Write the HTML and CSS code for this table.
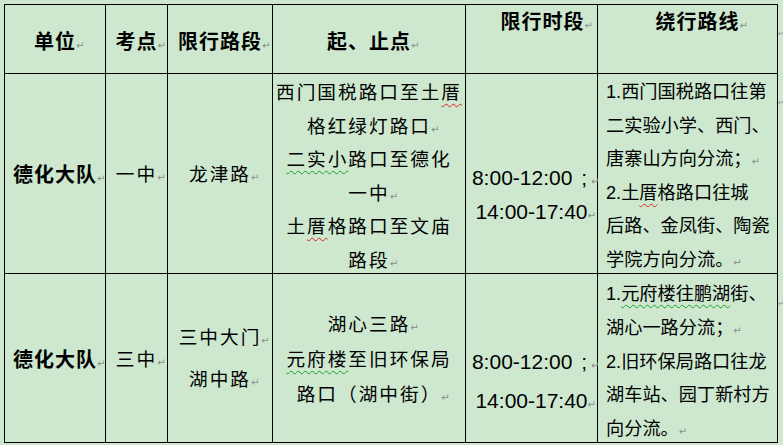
FILE: index.html
```html
<!DOCTYPE html>
<html lang="zh-CN">
<head>
<meta charset="utf-8">
<title>限行路段</title>
<link rel="stylesheet" href="styles.css">
</head>
<body>
<div class="page">
  <div class="tbl">
    <div class="cell hd hd-mid">单位<span class="pm">↵</span></div>
    <div class="cell hd hd-mid">考点<span class="pm">↵</span></div>
    <div class="cell hd hd-mid">限行路段<span class="pm">↵</span></div>
    <div class="cell hd hd-mid">起、止点<span class="pm">↵</span></div>
    <div class="cell hd hd-top hd-time">限行时段<span class="pm">↵</span></div>
    <div class="cell hd hd-top hd-route">绕行路线<span class="pm">↵</span></div>

    <div class="cell unit r1-single">德化大队<span class="pm">↵</span></div>
    <div class="cell spaced r1-single">一中<span class="pm">↵</span></div>
    <div class="cell spaced r1-single">龙津路<span class="pm">↵</span></div>
    <div class="cell spaced r1-range">西门国税路口至土<span class="sq-red">厝</span><br>格红绿灯路口<span class="pm">↵</span><br><span class="sq-green">二实小</span>路口至德化<br>一中<span class="pm">↵</span><br>土<span class="sq-red">厝</span>格路口至文庙<br>路段<span class="pm">↵</span></div>
    <div class="cell time r1-time">8:00-12:00 <span class="semi">;</span><span class="pm">↵</span><br>14:00-17:40<span class="pm">↵</span></div>
    <div class="cell route r1-route">1.西门国税路口往第<br>二实验小学、西门、<br>唐寨山方向分流；<span class="pm">↵</span><br>2.土<span class="sq-red">厝</span>格路口往城<br>后路、金凤街、陶瓷<br>学院方向分流。<span class="pm">↵</span></div>

    <div class="cell unit r2-single">德化大队<span class="pm">↵</span></div>
    <div class="cell spaced r2-single">三中<span class="pm">↵</span></div>
    <div class="cell spaced r2-section">三中大门<span class="pm">↵</span><br>湖中路<span class="pm">↵</span></div>
    <div class="cell spaced r2-range">湖心三路<span class="pm">↵</span><br><span class="sq-green">元府楼</span>至旧环保局<br>路口（湖中街）<span class="pm">↵</span></div>
    <div class="cell time r2-time">8:00-12:00 <span class="semi">;</span><span class="pm">↵</span><br>14:00-17:40<span class="pm">↵</span></div>
    <div class="cell route r2-route">1.<span class="sq-green">元府楼往鹏湖</span>街、<br>湖心一路分流；<span class="pm">↵</span><br>2.旧环保局路口往龙<br>湖车站、园丁新村方<br>向分流。<span class="pm">↵</span></div>
  </div>
  <div class="ends">
    <div class="end end-hd"><span class="pm-end">↵</span></div>
    <div class="end end-r1"><span class="pm-end">↵</span></div>
    <div class="end end-r2"><span class="pm-end">↵</span></div>
  </div>
</div>
</body>
</html>
```

FILE: styles.css
```css
html, body {
  margin: 0;
  padding: 0;
  background: #cde8cf;
  overflow: hidden;
}

body {
  font-family: "Liberation Sans", "Noto Sans CJK SC", sans-serif;
  color: #000;
}

.page {
  display: flex;
  align-items: flex-start;
  padding: 4px 0 0 4px;
}

.tbl {
  display: grid;
  grid-template-columns: 101px 62px 105px 193px 132px 180px;
  grid-template-rows: 69px 200px 169px;
  border-left: 1px solid #000;
  border-top: 1px solid #000;
}

.cell {
  box-sizing: border-box;
  border-right: 1px solid #000;
  border-bottom: 1px solid #000;
  text-align: center;
  white-space: nowrap;
  font-size: 18.67px;
  line-height: 30px;
}

.pm {
  display: inline-block;
  width: 0;
  font-family: "DejaVu Sans", sans-serif;
  font-size: 10px;
  line-height: 10px;
  font-weight: normal;
  color: #8c8c8c;
  letter-spacing: 0;
  vertical-align: baseline;
  overflow: visible;
}

.hd {
  font-size: 20px;
  font-weight: bold;
  letter-spacing: 1px;
  line-height: 30px;
}

.hd-mid { padding-top: 22px; }
.hd-top { padding-top: 2px; }
.hd-time { padding-left: 22px; }
.hd-route { padding-left: 20px; }

.unit {
  font-size: 20px;
  font-weight: bold;
  letter-spacing: 1px;
}

.spaced {
  letter-spacing: 2px;
}

.time {
  font-size: 21px;
}

.semi {
  padding: 0 4px 0 3px;
}

.route {
  text-align: left;
  padding-left: 8px;
  font-size: 18.2px;
}

.r1-single { padding-top: 86px; }
.r1-range { padding-top: 2px; line-height: 33.5px; }
.r1-time { padding-top: 87px; line-height: 33.5px; }
.r1-route { padding-top: 2px; line-height: 33.5px; }

.r2-single { padding-top: 71px; }
.r2-section { padding-top: 43px; line-height: 42px; }
.r2-range { padding-top: 33px; line-height: 35px; }
.r2-time { padding-top: 68px; line-height: 39px; }
.r2-route { padding-top: 4px; line-height: 33.75px; }

.sq-red {
  text-decoration: underline wavy #e02020;
  text-decoration-thickness: 1px;
  text-underline-offset: 4px;
}

.sq-green {
  text-decoration: underline wavy #1aa01a;
  text-decoration-thickness: 1px;
  text-underline-offset: 4px;
}

.ends {
  display: flex;
  flex-direction: column;
  width: 5px;
  padding-top: 1px;
}

.end {
  box-sizing: border-box;
  padding-left: 0;
  line-height: 10px;
}

.end-hd { height: 69px; padding-top: 21px; }
.end-r1 { height: 200px; padding-top: 21px; }
.end-r2 { height: 169px; padding-top: 22px; }

.pm-end {
  font-family: "DejaVu Sans", sans-serif;
  font-size: 7px;
  color: #8c8c8c;
}
```
